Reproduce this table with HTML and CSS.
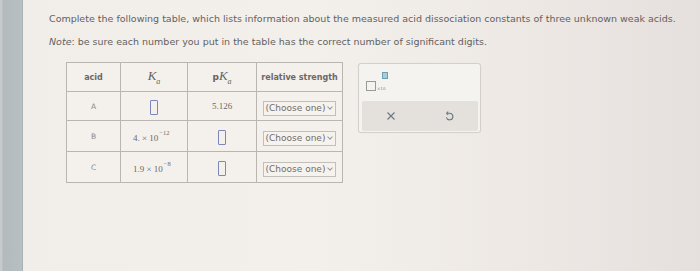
FILE: index.html
```html
<!DOCTYPE html>
<html>
<head>
<meta charset="utf-8">
<link rel="stylesheet" href="styles.css">
</head>
<body>
<div class="screen">
  <div class="rail"></div>
  <main class="content">
    <p class="line first">Complete the following table, which lists information about the measured acid dissociation constants of three unknown weak acids.</p>
    <p class="line second"><em>Note</em>: be sure each number you put in the table has the correct number of significant digits.</p>

    <div class="work">
      <table class="acids">
        <thead>
          <tr>
            <th class="c-acid">acid</th>
            <th class="c-ka"><span class="math"><i>K</i><sub>a</sub></span></th>
            <th class="c-pka"><span class="math"><b class="p">p</b><i>K</i><sub>a</sub></span></th>
            <th class="c-rel">relative strength</th>
          </tr>
        </thead>
        <tbody>
          <tr class="row-a">
            <td class="name">A</td>
            <td><span class="slot"></span></td>
            <td class="num">5.126</td>
            <td><span class="pick">(Choose one)<span class="chev"></span></span></td>
          </tr>
          <tr>
            <td class="name">B</td>
            <td class="num sci">4. &times; 10<sup>&minus;12</sup></td>
            <td><span class="slot"></span></td>
            <td><span class="pick">(Choose one)<span class="chev"></span></span></td>
          </tr>
          <tr>
            <td class="name">C</td>
            <td class="num sci">1.9 &times; 10<sup>&minus;8</sup></td>
            <td><span class="slot"></span></td>
            <td><span class="pick">(Choose one)<span class="chev"></span></span></td>
          </tr>
        </tbody>
      </table>

      <div class="tools">
        <div class="tool-top">
          <span class="sci-btn">
            <span class="box"></span><span class="x10">&times;10</span><span class="exp"></span>
          </span>
        </div>
        <div class="tool-bar">
          <svg class="ico" width="10" height="10" viewBox="0 0 10 10"><path d="M1.5 1.5 L8.5 8.5 M8.5 1.5 L1.5 8.5" stroke="#6d7a86" stroke-width="1.2" fill="none"/></svg>
          <svg class="ico" width="10" height="11" viewBox="0 0 10 11"><path d="M3 2.2 H5.6 A3.3 3.3 0 1 1 2.4 6.4" stroke="#6d7a86" stroke-width="1.1" fill="none"/><path d="M4.2 0.6 L2.6 2.2 L4.2 3.8" stroke="#6d7a86" stroke-width="1.1" fill="none"/></svg>
        </div>
      </div>
    </div>
  </main>
</div>
</body>
</html>
```
FILE: styles.css
```css
html, body {
  margin: 0;
  padding: 0;
}

body {
  width: 700px;
  height: 271px;
  overflow: hidden;
  background: #ece8e3;
}

.screen {
  display: flex;
  height: 271px;
  background: linear-gradient(90deg, #f1eeea 0%, #f3f0ec 45%, #ece7e3 80%, #e5e0dd 100%);
}

.rail {
  width: 22px;
  flex: none;
  background: linear-gradient(90deg, #c6cacb 0px, #c6cacb 2px, #b2babe 3px, #b7bfc2 100%);
  border-right: 1px solid #a9b1b5;
}

.content {
  flex: 1;
  padding: 13px 0 0 26px;
  font-family: "DejaVu Sans", Verdana, sans-serif;
  color: #636160;
}

.line {
  margin: 0;
  font-size: 9.5px;
  line-height: 12px;
  letter-spacing: 0;
  white-space: nowrap;
}

.second {
  margin-top: 11px;
}

.work {
  display: flex;
  align-items: flex-start;
  gap: 15px;
  margin-top: 14px;
  margin-left: 17px;
}

.acids {
  border-collapse: collapse;
  border: 1px solid #aeaaa6;
  background: #f4f1ed;
}

.acids th,
.acids td {
  border: 1px solid #b9b5b1;
  text-align: center;
  vertical-align: middle;
  padding: 0;
  height: 30px;
}

.acids .row-a td {
  height: 28px;
}

.acids thead th {
  height: 28px;
  font-size: 8px;
  font-weight: bold;
  color: #6a6866;
}

.c-acid { width: 53px; }
.c-ka { width: 66px; }
.c-pka { width: 68px; }
.c-rel { width: 85px; }

.math {
  font-family: "Liberation Serif", "Times New Roman", serif;
  font-weight: normal;
  font-size: 13px;
  color: #656361;
}

.math i {
  font-style: italic;
}

.math sub {
  font-size: 8px;
  font-style: italic;
  vertical-align: -4px;
}

.math .p {
  font-family: "DejaVu Sans", sans-serif;
  font-size: 9px;
  font-weight: bold;
}

.name {
  font-size: 7.5px;
  color: #8a8886;
}

.num {
  font-family: "Liberation Serif", "Times New Roman", serif;
  font-size: 9px;
  color: #6a6866;
}

.acids td.sci {
  text-align: left;
  padding-left: 12px;
}

.sci sup {
  font-size: 6.5px;
  vertical-align: 6px;
  margin-left: 1px;
}

.slot {
  display: inline-block;
  width: 6px;
  height: 13px;
  border: 1px solid #7d86b8;
  border-radius: 1px;
  vertical-align: middle;
}

.pick {
  display: inline-flex;
  align-items: center;
  gap: 3px;
  height: 13px;
  padding: 0 2px 0 2px;
  border: 1px solid #c2beba;
  font-size: 9px;
  color: #6f6d6b;
  background: #f6f3ef;
}

.chev {
  width: 3px;
  height: 3px;
  border-right: 1px solid #9a9896;
  border-bottom: 1px solid #9a9896;
  transform: rotate(45deg);
  margin-top: -2px;
  margin-right: 1px;
}

.tools {
  width: 116px;
  height: 67px;
  margin-top: 1px;
  border: 1px solid #d3cfcb;
  border-radius: 3px;
  background: #f5f3f0;
  display: flex;
  flex-direction: column;
  padding: 0 2px 1px 3px;
  box-sizing: content-box;
  box-shadow: 0 0 1px rgba(0, 0, 0, 0.08);
}

.tool-top {
  height: 37px;
  display: flex;
  align-items: center;
  padding-left: 4px;
}

.sci-btn {
  position: relative;
  display: flex;
  align-items: flex-end;
  margin-top: 6px;
}

.box {
  width: 8px;
  height: 8px;
  border: 1px solid #9c9a98;
}

.x10 {
  font-size: 4px;
  color: #888;
  margin-left: 1px;
  line-height: 5px;
}

.exp {
  position: absolute;
  left: 16px;
  top: -9px;
  width: 4px;
  height: 5px;
  background: #a9cdd8;
  border: 1px solid #6d9fb0;
}

.tool-bar {
  flex: 1;
  background: #e4e1dd;
  border-radius: 2px;
  display: flex;
  align-items: center;
  justify-content: flex-start;
  gap: 48px;
  padding: 0 0 0 24px;
}

.ico {
  display: block;
}
```
